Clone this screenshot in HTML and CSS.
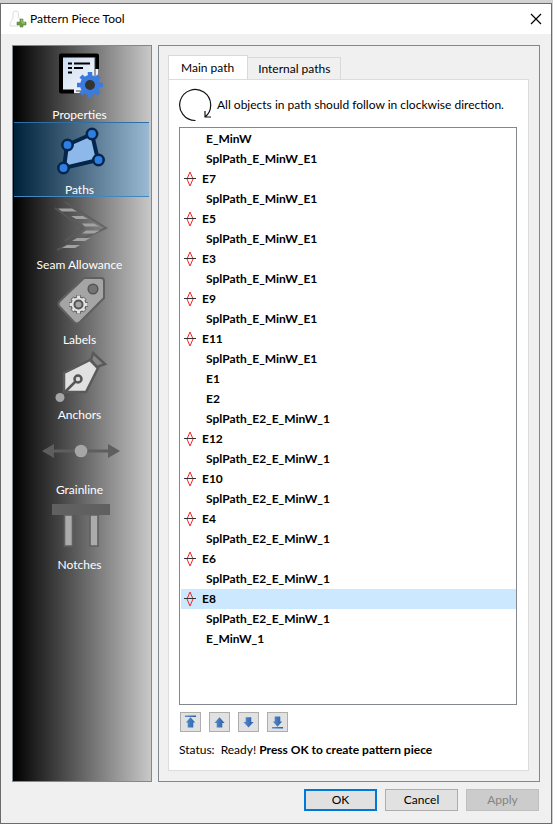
FILE: index.html
```
<!DOCTYPE html>
<html lang="en">
<head>
  <meta charset="UTF-8">
  <title>Pattern Piece Tool</title>
  <link rel="stylesheet" href="styles.css">
</head>
<body>
  <!-- shared shapes -->
  <svg class="defs" width="0" height="0">
    <defs>
      <linearGradient id="sheet" x1="0" y1="0" x2="1" y2="1">
        <stop offset="0" stop-color="#c9dcf2"/>
        <stop offset="1" stop-color="#f8fafd"/>
      </linearGradient>
      <linearGradient id="blue" x1="0" y1="0" x2="1" y2="0">
        <stop offset="0" stop-color="#5a8fd0"/>
        <stop offset="1" stop-color="#2a5da6"/>
      </linearGradient>
      <symbol id="passmark" viewBox="0 0 12 16">
        <path d="M6 1L9 8L6 15L3 8Z" fill="none" stroke="#f22" stroke-width="1"/>
        <path d="M0 7.500H12" stroke="#333" stroke-width="1"/>
      </symbol>
    </defs>
  </svg>

  <div class="window">
    <header class="titlebar">
      <svg class="app-icon" width="18" height="18" viewBox="0 0 18 18">
        <path d="M4 7V3L5.500 1H8L9.500 3V7L11 10M4 7C4 10 1 10 1 16H9" fill="#fdfdfd" stroke="#ddd"/>
        <path d="M11 9h3v3h3v3h-3v2h-3v-2H8v-3h3z" fill="#6d9b45" stroke="#5d8a3c" stroke-width=".6"/>
        <path d="M12 10h1v3h3" fill="none" stroke="#a6c884"/>
      </svg>
      <h1 class="title">Pattern Piece Tool</h1>
      <button class="close" type="button" aria-label="Close">
        <svg width="12" height="12" viewBox="0 0 12 12"><path d="M1 1L11 11M11 1L1 11" stroke="#000" stroke-width="1.2"/></svg>
      </button>
    </header>

    <main class="content">
      <!-- page list -->
      <nav class="sidebar">
        <button class="page" type="button">
          <svg width="80" height="60" viewBox="0 0 80 60">
            <path d="M20 7H58V46H20Z" fill="url(#sheet)"/>
            <path d="M57 22V8.500H21V44.500H34" fill="none" stroke="#000" stroke-width="4" stroke-linejoin="round"/>
            <path d="M55 10V44H36" fill="none" stroke="#444" stroke-width="1"/>
            <path d="M28 16.500h4M34 16.500h16M28 21h4M34 21h9M28 25.500h4" stroke="#000" stroke-width="2"/>
            <path d="M50 25V51M37 38H63M41 29L59 47M59 29L41 47" stroke="#3b7be0" stroke-width="4.500"/>
            <circle cx="50" cy="38" r="7.500" fill="#333" stroke="#3b7be0" stroke-width="5"/>
          </svg>
          <span>Properties</span>
        </button>
        <button class="page selected" type="button">
          <svg width="80" height="60" viewBox="0 0 80 60">
            <path d="M27 23L52 12L58 38L24 46Z" fill="#8cb9ea" stroke="#05264a" stroke-width="4"/>
            <g fill="#2f7ee2" stroke="#05264a" stroke-width="2.500">
              <circle cx="27.500" cy="23" r="5.200"/>
              <circle cx="52" cy="12" r="5.200"/>
              <circle cx="58.500" cy="38" r="5.200"/>
              <circle cx="23.500" cy="46" r="5.200"/>
            </g>
          </svg>
          <span>Paths</span>
        </button>
        <button class="page" type="button">
          <svg width="80" height="60" viewBox="0 0 80 60">
            <path d="M25 5L66 31L17 53M15 11L43 31L25 44" fill="none" stroke="#5b5b5b" stroke-width="2" opacity=".75"/>
            <path d="M18 11.500h14l5 3H22zM31 19h12l5 3H36zM42 26.500h12l5 3H45zM46 33.500h14l-6 3H42zM37 41h13l-5 3H32zM27 48h13l-5 3H22z" fill="#a2a2a2"/>
          </svg>
          <span>Seam Allowance</span>
        </button>
        <button class="page" type="button">
          <svg width="80" height="60" viewBox="0 0 80 60">
            <path d="M44 6H61Q64 6 64 9V26L40 50Q37 53 34 50L20 35Q17 32 20 29Z" fill="#a5a5a5" stroke="#606060" stroke-width="2"/>
            <circle cx="53" cy="17" r="4.800" fill="#747474" stroke="#555" stroke-width="1.500"/>
            <path d="M38.500 23V42M29 32.500H48M32 26L45 39M45 26L32 39" stroke="#606060" stroke-width="4.500"/>
            <circle cx="38.500" cy="32.500" r="8" fill="#606060"/>
            <path d="M38.500 23.500V41.500M29.500 32.500H47.500M32.500 26.500L44.500 38.500M44.500 26.500L32.500 38.500" stroke="#e2e2e2" stroke-width="3"/>
            <circle cx="38.500" cy="32.500" r="7" fill="#e2e2e2"/>
            <circle cx="38.500" cy="32.500" r="4" fill="#a5a5a5" stroke="#555" stroke-width="2"/>
          </svg>
          <span>Labels</span>
        </button>
        <button class="page" type="button">
          <svg width="80" height="60" viewBox="0 0 80 60">
            <path d="M24 26L50 13L58 21L46 45H24Z" fill="#e1e1e1" stroke="#5a5a5a" stroke-width="2.500"/>
            <path d="M53 6L65 17L57 20L51 13Z" fill="#858585" stroke="#5a5a5a" stroke-width="2.500"/>
            <path d="M24 46L36 34" stroke="#555" stroke-width="2.500"/>
            <circle cx="38" cy="32" r="3.500" fill="#ddd" stroke="#555" stroke-width="2.500"/>
            <circle cx="20" cy="50.500" r="4.500" fill="#a6a6a6"/>
          </svg>
          <span>Anchors</span>
        </button>
        <button class="page" type="button">
          <svg width="80" height="60" viewBox="0 0 80 60">
            <path d="M12 29H70" stroke="#5e5e5e" stroke-width="3"/>
            <path d="M2 29L14 22V36ZM80 29L68 22V36Z" fill="#5e5e5e"/>
            <circle cx="41" cy="29" r="6.300" fill="#a6a6a6"/>
          </svg>
          <span>Grainline</span>
        </button>
        <button class="page" type="button">
          <svg width="80" height="60" viewBox="0 0 80 60">
            <path d="M12 7H70V18H12Z" fill="#606060"/>
            <path d="M24.500 18H32.500V49H24.500ZM50 18H58V49H50Z" fill="#ababab" stroke="#606060" stroke-width="1.600"/>
          </svg>
          <span>Notches</span>
        </button>
      </nav>

      <section class="group">
        <div class="tabs" role="tablist">
          <button class="tab active" type="button" role="tab" aria-selected="true">Main path</button>
          <button class="tab" type="button" role="tab" aria-selected="false">Internal paths</button>
        </div>

        <div class="panel" role="tabpanel">
          <div class="hint">
            <svg width="34" height="34" viewBox="0 0 34 34">
              <path d="M16.500 32.500A15.500 15.500 0 1 1 26 29M26 23V29H32" fill="none" stroke="#111" stroke-width="1.200"/>
            </svg>
            <p>All objects in path should follow in clockwise direction.</p>
          </div>

          <ul class="path-list">
            <li>E_MinW</li>
            <li>SplPath_E_MinW_E1</li>
            <li class="mark"><svg><use href="#passmark"/></svg>E7</li>
            <li>SplPath_E_MinW_E1</li>
            <li class="mark"><svg><use href="#passmark"/></svg>E5</li>
            <li>SplPath_E_MinW_E1</li>
            <li class="mark"><svg><use href="#passmark"/></svg>E3</li>
            <li>SplPath_E_MinW_E1</li>
            <li class="mark"><svg><use href="#passmark"/></svg>E9</li>
            <li>SplPath_E_MinW_E1</li>
            <li class="mark"><svg><use href="#passmark"/></svg>E11</li>
            <li>SplPath_E_MinW_E1</li>
            <li>E1</li>
            <li>E2</li>
            <li>SplPath_E2_E_MinW_1</li>
            <li class="mark"><svg><use href="#passmark"/></svg>E12</li>
            <li>SplPath_E2_E_MinW_1</li>
            <li class="mark"><svg><use href="#passmark"/></svg>E10</li>
            <li>SplPath_E2_E_MinW_1</li>
            <li class="mark"><svg><use href="#passmark"/></svg>E4</li>
            <li>SplPath_E2_E_MinW_1</li>
            <li class="mark"><svg><use href="#passmark"/></svg>E6</li>
            <li>SplPath_E2_E_MinW_1</li>
            <li class="mark current"><svg><use href="#passmark"/></svg>E8</li>
            <li>SplPath_E2_E_MinW_1</li>
            <li>E_MinW_1</li>
          </ul>

          <!-- reorder buttons -->
          <div class="movers">
            <button type="button" aria-label="Move to top">
              <svg width="13" height="14" viewBox="0 0 14 14"><path d="M1 0H13V1.500H1ZM7 2L12 7.500H10V13H4V7.500H2Z" fill="url(#blue)"/></svg>
            </button>
            <button type="button" aria-label="Move up">
              <svg width="13" height="14" viewBox="0 0 14 14"><path d="M7 2L12.500 8H10V13H4V8H1.500Z" fill="url(#blue)"/></svg>
            </button>
            <button type="button" aria-label="Move down">
              <svg width="13" height="14" viewBox="0 0 14 14"><path d="M7 13L12.500 7H10V2H4V7H1.500Z" fill="url(#blue)"/></svg>
            </button>
            <button type="button" aria-label="Move to bottom">
              <svg width="13" height="14" viewBox="0 0 14 14"><path d="M1 12.500H13V14H1ZM7 12L12 6.500H10V1H4V6.500H2Z" fill="url(#blue)"/></svg>
            </button>
          </div>

          <p class="status"><span>Status:</span><span>Ready! <b>Press OK to create pattern piece</b></span></p>
        </div>
      </section>
    </main>

    <footer class="actions">
      <button class="btn default" type="button">OK</button>
      <button class="btn" type="button">Cancel</button>
      <button class="btn" type="button" disabled>Apply</button>
    </footer>
  </div>
</body>
</html>
```
FILE: styles.css
```
*{
  box-sizing: border-box;
}

body{
  margin: 0;
  padding: 3px 1px 0 0;
  background: #d2d2d2;
  color: #000;
  font: 12px/16px Lato, "Open Sans", sans-serif;
}

button{
  margin: 0;
  padding: 0;
  border: none;
  background: none;
  color: inherit;
  font: inherit;
}

p, h1, ul{
  margin: 0;
  padding: 0;
}

svg{
  display: block;
  flex: none;
}

.defs{
  position: absolute;
}

.window{
  display: flex;
  flex-direction: column;
  min-height: calc(100vh - 3px);
  border: 1px solid #6b6b6b;
  background: #f0f0f0;
}

/* title bar */
.titlebar{
  display: flex;
  align-items: center;
  height: 30px;
  padding: 0 8px;
  background: #fff;
}
.title{
  flex: 1;
  margin-left: 3px;
  font-size: 12px;
  font-weight: normal;
}
.close{
  padding: 0 1px;
}

.content{
  flex: 1;
  display: flex;
  gap: 6px;
  padding: 11px 11px 0;
}

/* left page list */
.sidebar{
  flex: none;
  width: 140px;
  padding: 1px 2px 1px 1px;
  border: 1px solid #828790;
  background: linear-gradient(to right, #000, #c8c8c8);
}
.page{
  display: flex;
  flex-direction: column;
  align-items: center;
  width: 100%;
  height: 75px;
  padding-right: 4px;
  color: #fff;
  line-height: 15px;
}
.page.selected{
  background: linear-gradient(to right, #00213a, #9ab9d3);
  box-shadow: inset 0 1px #2d70a8, inset 0 -1px #4287bf;
}

/* right side */
.group{
  flex: 1;
  display: flex;
  flex-direction: column;
  min-width: 0;
  padding: 9px 10px 10px 9px;
  border: 1px solid #828790;
}
.tabs{
  display: flex;
  align-items: flex-end;
}
.tab{
  height: 22px;
  padding: 0 10px;
  border: 1px solid #d9d9d9;
  border-left: none;
  border-bottom: none;
}
.tab.active{
  height: 25px;
  margin-bottom: -1px;
  padding: 0 13px 0 12px;
  border-left: 1px solid #d9d9d9;
  background: #fff;
}
.panel{
  flex: 1;
  display: flex;
  flex-direction: column;
  padding: 8px 11px 12px 10px;
  border: 1px solid #dcdcdc;
  background: #fff;
}
.hint{
  display: flex;
  align-items: center;
  gap: 4px;
  margin-bottom: 5px;
  white-space: nowrap;
}

/* path objects */
.path-list{
  flex: 1;
  padding: 1px 0 2px 1px;
  border: 1px solid #828790;
  list-style: none;
  font-weight: bold;
}
.path-list li{
  display: flex;
  align-items: center;
  height: 20px;
  padding-left: 25px;
}
.path-list .mark{
  gap: 6px;
  padding-left: 3px;
}
.path-list .current{
  background: #cce8ff;
}
.path-list svg{
  width: 12px;
  height: 16px;
}

.movers{
  display: flex;
  gap: 8px;
  margin: 7px 1px 10px;
}
.movers button{
  display: grid;
  place-items: center;
  width: 21px;
  height: 20px;
  border: 1px solid #adadad;
  background: #e1e1e1;
}
.status{
  display: flex;
  gap: 6px;
}

/* dialog buttons */
.actions{
  display: flex;
  justify-content: flex-end;
  gap: 8px;
  padding: 7px 12px 12px;
}
.btn{
  width: 73px;
  height: 22px;
  border: 1px solid #adadad;
  background: #e1e1e1;
}
.btn.default{
  border: 2px solid #0078d7;
}
.btn:disabled{
  border-color: #bfbfbf;
  background: #ccc;
  color: #838383;
}
```
